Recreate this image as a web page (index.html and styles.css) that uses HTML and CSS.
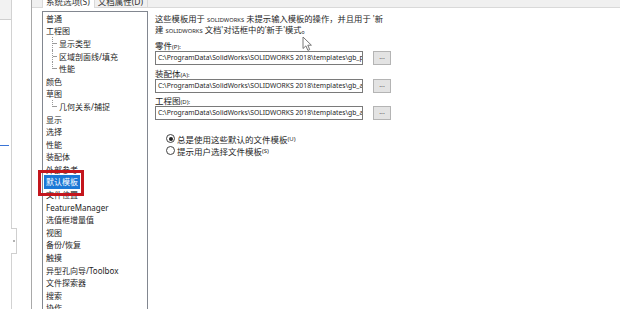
FILE: index.html
```html
<!DOCTYPE html>
<html>
<head>
  <title>系统选项 - 默认模板</title>
  <link rel="stylesheet" href="styles.css">
</head>
<body>
  <div class="screen">
    <div class="backwin">
      <div class="bw-rail">
        <div class="bw-box"></div>
        <div class="bw-blue"></div>
        <div class="bw-grip"><span></span></div>
      </div>
    </div>

    <div class="dialog">
      <div class="tabs">
        <div class="tab active">系统选项(S)</div>
        <div class="tab">文档属性(D)</div>
      </div>

      <div class="page">
        <ul class="tree">
          <li>普通</li>
          <li>工程图</li>
          <li class="child"><span class="branch"></span>显示类型</li>
          <li class="child"><span class="branch"></span>区域剖面线/填充</li>
          <li class="child"><span class="branch last"></span>性能</li>
          <li>颜色</li>
          <li>草图</li>
          <li class="child"><span class="branch last"></span>几何关系/捕捉</li>
          <li>显示</li>
          <li>选择</li>
          <li>性能</li>
          <li>装配体</li>
          <li>外部参考</li>
          <li><span class="selected">默认模板</span></li>
          <li>文件位置</li>
          <li>FeatureManager</li>
          <li>选值框增量值</li>
          <li>视图</li>
          <li>备份/恢复</li>
          <li>触摸</li>
          <li>异型孔向导/Toolbox</li>
          <li>文件探索器</li>
          <li>搜索</li>
          <li>协作</li>
        </ul>

        <div class="content">
          <div class="desc">
            <div>这些模板用于 <span class="caps">SOLIDWORKS</span> 未提示输入模板的操作，并且用于 '新</div>
            <div>建 <span class="caps">SOLIDWORKS</span> 文档'对话框中的'新手'模式。</div>
          </div>

          <div class="field">
            <div class="label">零件<small>(P):</small></div>
            <div class="row">
              <div class="path">C:\ProgramData\SolidWorks\SOLIDWORKS 2018\templates\gb_p</div>
              <div class="browse">...</div>
            </div>
          </div>

          <div class="field">
            <div class="label">装配体<small>(A):</small></div>
            <div class="row">
              <div class="path">C:\ProgramData\SolidWorks\SOLIDWORKS 2018\templates\gb_a</div>
              <div class="browse">...</div>
            </div>
          </div>

          <div class="field">
            <div class="label">工程图<small>(D):</small></div>
            <div class="row">
              <div class="path">C:\ProgramData\SolidWorks\SOLIDWORKS 2018\templates\gb_a</div>
              <div class="browse">...</div>
            </div>
          </div>

          <div class="radios">
            <div class="radio"><span class="dot checked"></span>总是使用这些默认的文件模板<small>(U)</small></div>
            <div class="radio"><span class="dot"></span>提示用户选择文件模板<small>(S)</small></div>
          </div>
        </div>
      </div>
    </div>

    <div class="callout"></div>

    <svg class="cursor" width="11" height="16" viewBox="0 0 11 16">
      <path d="M1 1 L1 12.5 L3.9 9.9 L5.9 14.4 L7.7 13.6 L5.8 9.2 L9.4 9.2 Z" fill="#fff" stroke="#6a6a6a" stroke-width="0.9" stroke-linejoin="round"/>
    </svg>
  </div>
</body>
</html>
```

FILE: styles.css
```css
body {
  margin: 0;
  padding: 0;
  background: #fff;
  font-family: "Noto Sans", "Noto Sans CJK SC", sans-serif;
  color: #1e1e1e;
}

.screen {
  position: relative;
  display: flex;
  width: 620px;
  height: 309px;
  overflow: hidden;
}

/* window behind the dialog */
.backwin {
  width: 31px;
  flex-shrink: 0;
  border-right: 1px solid #a9a9a9;
  background: #fff;
}

.bw-rail {
  display: flex;
  flex-direction: column;
  width: 11px;
  height: 100%;
  border-right: 1px solid #d2d2d2;
}

.bw-box {
  height: 19px;
  background: #f2f2f2;
  border-bottom: 1px solid #cfcfcf;
}

.bw-blue {
  margin-top: 125px;
  width: 9px;
  height: 1px;
  background: #3a74d6;
}

.bw-grip {
  display: flex;
  align-items: center;
  justify-content: center;
  align-self: flex-end;
  margin-top: 82px;
  margin-right: -6px;
  width: 5px;
  height: 24px;
  background: #fff;
  border: 1px solid #cfcfcf;
  border-left: none;
}

.bw-grip span {
  width: 2px;
  height: 2px;
  background: #9a9a9a;
  border-radius: 50%;
}

/* dialog */
.dialog {
  flex: 1;
  display: flex;
  flex-direction: column;
  background: #fff;
}

.tabs {
  display: flex;
  height: 7px;
  padding-left: 11px;
  background: #f0f0f0;
  border-bottom: 1px solid #d9d9d9;
}

.tab {
  height: 7px;
  overflow: hidden;
  padding: 0 4px 0 3px;
  font-size: 8.5px;
  line-height: 4px;
  color: #333;
  border-right: 1px solid #d9d9d9;
}

.tab.active {
  height: 8px;
  background: #fff;
  border-left: 1px solid #d9d9d9;
  margin-left: -1px;
}

.page {
  flex: 1;
  display: flex;
  padding: 3px 0 0 10px;
  min-height: 0;
}

.tree {
  width: 106px;
  box-sizing: border-box;
  margin: 0;
  padding: 0 0 0 3px;
  list-style: none;
  border: 1px solid #828790;
  border-bottom: none;
  overflow: hidden;
  flex-shrink: 0;
}

.tree li {
  display: flex;
  align-items: center;
  height: 12.6px;
  font-size: 8px;
  white-space: nowrap;
}

.branch {
  align-self: stretch;
  width: 4px;
  margin: 0 2px 0 6px;
  border-left: 1px dotted #9a9a9a;
  background: linear-gradient(#9a9a9a, #9a9a9a) no-repeat 0 6px / 4px 1px;
}

.branch.last {
  align-self: flex-start;
  height: 7px;
}

.selected {
  display: inline-block;
  margin-left: -2px;
  padding: 0 2px;
  line-height: 14px;
  background: #1b78d6;
  color: #fff;
}

.content {
  padding: 2px 0 0 7px;
  font-size: 8.5px;
}

.desc {
  font-size: 8.3px;
  white-space: nowrap;
}

.desc div {
  height: 11px;
  line-height: 11px;
}

.caps {
  font-size: 5.8px;
  line-height: 0;
}

.field {
  margin-top: 2.5px;
}

.desc + .field {
  margin-top: 5px;
}

.label {
  height: 11px;
  line-height: 11px;
}

.label small,
.radio small {
  font-size: 6px;
  line-height: 0;
}

.row {
  display: flex;
  align-items: center;
}

.path {
  width: 208px;
  height: 14px;
  box-sizing: border-box;
  border: 1px solid #7a7a7a;
  padding-left: 2px;
  font-size: 6.8px;
  line-height: 12px;
  white-space: nowrap;
  overflow: hidden;
  background: #fff;
}

.browse {
  width: 18px;
  height: 14px;
  box-sizing: border-box;
  margin-left: 10px;
  border: 1px solid #b4b4b4;
  background: #e3e3e3;
  color: #666;
  font-size: 7px;
  line-height: 10px;
  text-align: center;
}

.radios {
  margin: 12.5px 0 0 11px;
}

.radio {
  display: flex;
  align-items: center;
  height: 12px;
  white-space: nowrap;
}

.dot {
  display: flex;
  align-items: center;
  justify-content: center;
  width: 7px;
  height: 7px;
  margin-right: 2px;
  border: 1px solid #444;
  border-radius: 50%;
}

.dot.checked::after {
  content: "";
  width: 4px;
  height: 4px;
  border-radius: 50%;
  background: #222;
}

/* overlays */
.callout {
  position: absolute;
  left: 38px;
  top: 170px;
  width: 46px;
  height: 26px;
  box-sizing: border-box;
  border: 3px solid #c4161d;
}

.cursor {
  position: absolute;
  left: 302px;
  top: 36px;
}
```
